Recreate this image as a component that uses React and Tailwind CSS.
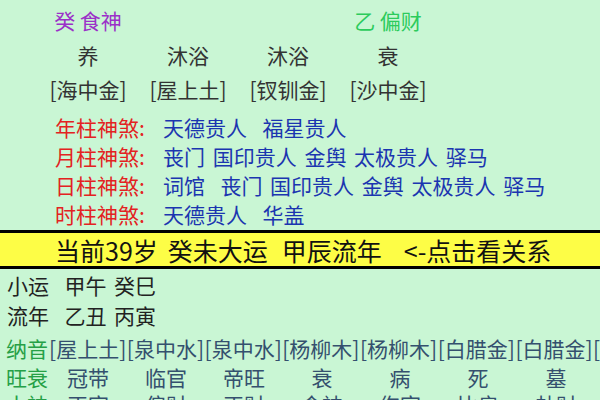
import React from "react";

const cols = [
  { top: "癸 食神", topColor: "text-[#9b30c8]", state: "养", nayin: "[海中金]" },
  { top: "", topColor: "", state: "沐浴", nayin: "[屋上土]" },
  { top: "", topColor: "", state: "沐浴", nayin: "[钗钏金]" },
  { top: "乙 偏财", topColor: "text-[#2ccb5c]", state: "衰", nayin: "[沙中金]" },
];

const shensha = [
  { label: "年柱神煞:", value: "天德贵人  福星贵人" },
  { label: "月柱神煞:", value: "丧门 国印贵人 金舆 太极贵人 驿马" },
  { label: "日柱神煞:", value: "词馆  丧门 国印贵人 金舆 太极贵人 驿马" },
  { label: "时柱神煞:", value: "天德贵人  华盖" },
];

const nayinList = ["[屋上土]", "[泉中水]", "[泉中水]", "[杨柳木]", "[杨柳木]", "[白腊金]", "[白腊金]"];
const wangshuai = ["冠带", "临官", "帝旺", "衰", "病", "死", "墓"];
const shishen = ["正官", "偏财", "正财", "食神", "伤官", "比肩", "劫财"];

function App() {
  return (
    <div
      className="w-[600px] h-[400px] overflow-hidden bg-[#c9f6d4] text-[21px] text-[#333] [word-spacing:3px]"
      style={{ fontFamily: '"Noto Sans CJK SC", "Noto Sans", sans-serif' }}
    >
      {/* 四柱 */}
      <div className="pl-[38px] [word-spacing:0px]">
        <div className="flex h-[36px] mt-[3px] items-center">
          {cols.map((c, i) => (
            <div key={i} className={`w-[100px] text-center ${c.topColor}`}>
              {c.top}
            </div>
          ))}
        </div>
        <div className="flex h-[34px] items-center">
          {cols.map((c, i) => (
            <div key={i} className="w-[100px] text-center">
              {c.state}
            </div>
          ))}
        </div>
        <div className="flex h-[34px] items-center">
          {cols.map((c, i) => (
            <div key={i} className="w-[100px] text-center">
              {c.nayin}
            </div>
          ))}
        </div>
      </div>

      {/* 神煞 */}
      <div className="mt-[6px] pl-[55px]">
        {shensha.map((s) => (
          <div key={s.label} className="flex h-[29px] items-center whitespace-pre">
            <span className="w-[108px] text-[#e32222]">{s.label}</span>
            <span className="text-[#1b35b0]">{s.value}</span>
          </div>
        ))}
      </div>

      {/* 大运 */}
      <div className="mt-[1px] h-[39px] border-y-[3px] border-black bg-[#fdfd46] pl-[55px] pt-[3px] flex items-center whitespace-nowrap text-[25px] text-[#111]">
        <span>当前39岁</span>
        <span className="ml-[10px]">癸未大运</span>
        <span className="ml-[14px]">甲辰流年</span>
        <span className="ml-[22px]">{"<-"}点击看关系</span>
      </div>

      <div className="pl-[7px] mt-[2px] text-[#222]">
        <div className="flex h-[30px] items-center whitespace-pre">小运  甲午 癸巳</div>
        <div className="flex h-[29px] items-center whitespace-pre">流年  乙丑 丙寅</div>
      </div>

      {/* 大运表 */}
      <div className="mt-[4px] pl-[6px] [word-spacing:0px]">
        <div className="flex h-[30px] items-center whitespace-nowrap">
          <span className="w-[43px] text-[#25a046]">纳音</span>
          {nayinList.map((n, i) => (
            <span key={i} className="w-[78px] text-center text-[#34506e]">
              {n}
            </span>
          ))}
          <span className="text-[#34506e]">[</span>
        </div>
        <div className="flex h-[27px] items-center whitespace-nowrap">
          <span className="w-[43px] text-[#25a046]">旺衰</span>
          {wangshuai.map((n, i) => (
            <span key={i} className="w-[78px] text-center text-[#34506e]">
              {n}
            </span>
          ))}
        </div>
        <div className="flex h-[28px] items-center whitespace-nowrap">
          <span className="w-[43px] text-[#25a046]">十神</span>
          {shishen.map((n, i) => (
            <span key={i} className="w-[78px] text-center text-[#34506e]">
              {n}
            </span>
          ))}
        </div>
      </div>
    </div>
  );
}

export default App;
